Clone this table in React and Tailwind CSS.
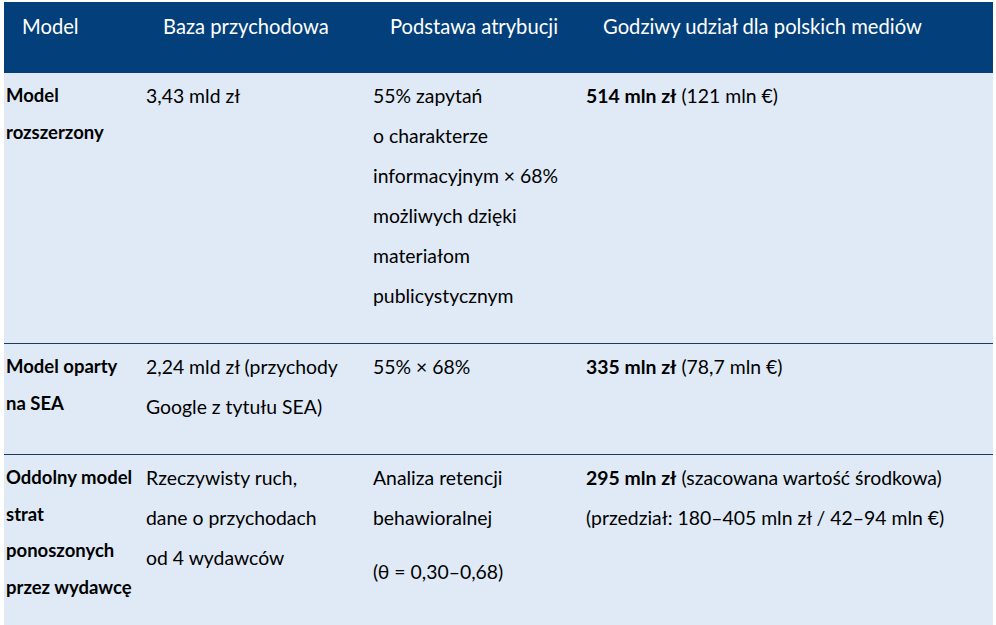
const font = { fontFamily: 'Lato, "Open Sans", sans-serif' };

const headers = ['Model', 'Baza przychodowa', 'Podstawa atrybucji', 'Godziwy udział dla polskich mediów'];

const rows = [
  {
    model: ['Model', 'rozszerzony'],
    base: [['3,43 mld zł']],
    attribution: [['55% zapytań', 'o charakterze', 'informacyjnym × 68%', 'możliwych dzięki', 'materiałom', 'publicystycznym']],
    share: [{ bold: '514 mln zł', rest: ' (121 mln €)' }],
  },
  {
    model: ['Model oparty', 'na SEA'],
    base: [['2,24 mld zł (przychody', 'Google z tytułu SEA)']],
    attribution: [['55% × 68%']],
    share: [{ bold: '335 mln zł', rest: ' (78,7 mln €)' }],
  },
  {
    model: ['Oddolny model', 'strat', 'ponoszonych', 'przez wydawcę'],
    base: [['Rzeczywisty ruch,', 'dane o przychodach', 'od 4 wydawców']],
    attribution: [['Analiza retencji', 'behawioralnej'], ['(θ = 0,30–0,68)']],
    share: [
      { bold: '295 mln zł', rest: ' (szacowana wartość środkowa)' },
      { bold: '', rest: '(przedział: 180–405 mln zł / 42–94 mln €)' },
    ],
  },
];

function Lines({ paragraphs }) {
  return (
    <div className="flex flex-col gap-[14px]">
      {paragraphs.map((lines, i) => (
        <div key={i}>
          {lines.map((line) => (
            <div key={line} className="whitespace-nowrap leading-[40px]">{line}</div>
          ))}
        </div>
      ))}
    </div>
  );
}

export default function App() {
  return (
    <div className="bg-white min-h-screen pl-[4px] pr-[3px] pt-[2px]" style={font}>
      <div className="bg-[#dfeaf6]">
        <div className="grid grid-cols-[139px_227px_213px_1fr] bg-[#033f7a] text-white text-[20.2px] h-[71px]">
          {headers.map((h, i) => (
            <div key={h} className={`${i === 0 ? 'pl-[18px]' : 'pl-[20px]'} pt-[11px] leading-[26px] whitespace-nowrap`}>{h}</div>
          ))}
        </div>

        {rows.map((row, idx) => (
          <div
            key={idx}
            className={`grid grid-cols-[139px_227px_213px_1fr] text-black text-[19.4px] pb-[27px] ${idx > 0 ? 'border-t border-[#1d3b60]' : ''}`}
          >
            <div className="pl-[2px] pt-[4px] font-bold text-[18.5px]">
              {row.model.map((line) => (
                <div key={line} className="whitespace-nowrap leading-[36.5px]">{line}</div>
              ))}
            </div>
            <div className="pl-[3px] pt-[3px]">
              <Lines paragraphs={row.base} />
            </div>
            <div className="pl-[3px] pt-[3px]">
              <Lines paragraphs={row.attribution} />
            </div>
            <div className="pl-[3px] pt-[3px]">
              {row.share.map((s) => (
                <div key={s.rest} className="whitespace-nowrap leading-[40px]">
                  {s.bold && <span className="font-bold">{s.bold}</span>}
                  {s.rest}
                </div>
              ))}
            </div>
          </div>
        ))}
      </div>
    </div>
  );
}
